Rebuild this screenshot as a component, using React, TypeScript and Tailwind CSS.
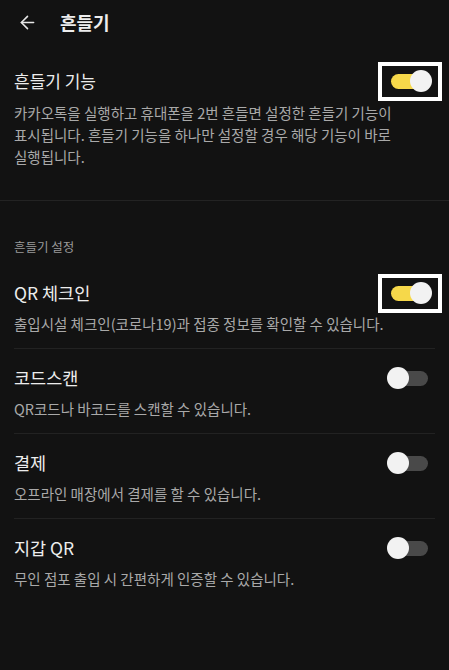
import { useState } from 'react'
import { ArrowLeft } from 'lucide-react'

const font = { fontFamily: '"Noto Sans CJK KR", "Noto Sans", sans-serif' }

function Toggle({ on, onChange, marked }: { on: boolean; onChange: () => void; marked?: boolean }) {
  return (
    <button onClick={onChange} className="relative w-[45px] h-[22px] shrink-0">
      <span
        className={`absolute left-[4px] right-[4px] top-[4px] h-[15px] rounded-full ${on ? 'bg-[#f6d84a]' : 'bg-[#494949]'}`}
      />
      <span
        className={`absolute top-0 w-[22px] h-[22px] rounded-full bg-[#f2f2f2] ${on ? 'right-0' : 'left-0'}`}
      />
      {marked && (
        <span className="absolute -left-[9px] -top-[8px] w-[64px] h-[39px] border-4 border-white" />
      )}
    </button>
  )
}

const items = [
  { key: 'qr', title: 'QR 체크인', desc: '출입시설 체크인(코로나19)과 접종 정보를 확인할 수 있습니다.', on: true },
  { key: 'scan', title: '코드스캔', desc: 'QR코드나 바코드를 스캔할 수 있습니다.', on: false },
  { key: 'pay', title: '결제', desc: '오프라인 매장에서 결제를 할 수 있습니다.', on: false },
  { key: 'wallet', title: '지갑 QR', desc: '무인 점포 출입 시 간편하게 인증할 수 있습니다.', on: false },
]

export default function App() {
  const [shake, setShake] = useState(true)
  const [state, setState] = useState<Record<string, boolean>>(
    Object.fromEntries(items.map((i) => [i.key, i.on]))
  )

  return (
    <div className="w-[449px] h-[670px] bg-[#121212] text-[#ededed] overflow-hidden" style={font}>
      {/* Header */}
      <div className="h-[44px] flex items-center pl-[17px]">
        <ArrowLeft size={21} strokeWidth={1.8} className="text-[#e6e6e6]" />
        <h1 className="ml-[22px] text-[18px] font-bold leading-none">흔들기</h1>
      </div>

      {/* Shake feature */}
      <div className="px-[14px] pt-[25px] pb-[32px] border-b border-[#232323]">
        <div className="flex items-center justify-between pr-[3px]">
          <div className="text-[17px] leading-[24px]">흔들기 기능</div>
          <Toggle on={shake} onChange={() => setShake(!shake)} marked />
        </div>
        <p className="mt-[9px] text-[14.5px] leading-[22px] text-[#a9a9a9] break-keep">
          카카오톡을 실행하고 휴대폰을 2번 흔들면 설정한 흔들기 기능이 표시됩니다. 흔들기 기능을 하나만 설정할 경우 해당 기능이 바로 실행됩니다.
        </p>
      </div>

      {/* Settings */}
      <div className="px-[14px] pt-[37px]">
        <div className="text-[12.5px] leading-[18px] text-[#9a9a9a] mb-[8px]">흔들기 설정</div>
        {items.map((item, idx) => (
          <div
            key={item.key}
            className={`pt-[17px] pb-[13px] ${idx < items.length - 1 ? 'border-b border-[#222222]' : ''}`}
          >
            <div className="flex items-center justify-between pr-[3px]">
              <div className="text-[17.5px] leading-[24px]">{item.title}</div>
              <Toggle
                on={state[item.key]}
                onChange={() => setState({ ...state, [item.key]: !state[item.key] })}
                marked={item.key === 'qr'}
              />
            </div>
            <p className="mt-[8px] text-[14.5px] leading-[22px] text-[#a9a9a9]">{item.desc}</p>
          </div>
        ))}
      </div>
    </div>
  )
}
